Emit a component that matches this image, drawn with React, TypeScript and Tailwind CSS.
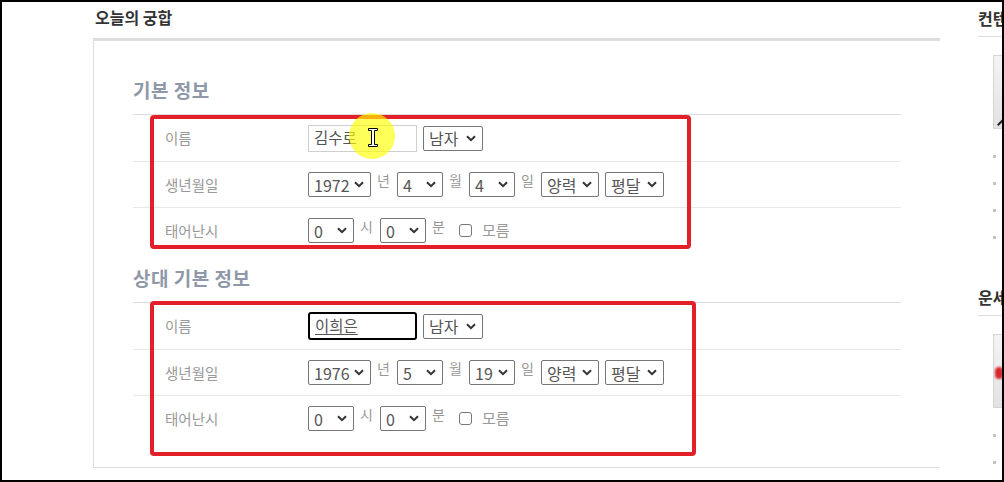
import React from 'react';

const FONT = { fontFamily: '"Noto Sans CJK KR", "Noto Sans", sans-serif' };

// native-looking select box
const Select = ({ value, w }: { value: string; w: string }) => (
  <div
    className={`${w} h-[25px] shrink-0 flex items-center justify-between pl-[5px] pr-[6px] border border-[#767676] rounded-[2px] bg-white text-[16px] leading-none text-[#555]`}
  >
    <span>{value}</span>
    <svg width="10" height="7" viewBox="0 0 10 7" className="shrink-0">
      <path d="M1 1.2 L5 5.2 L9 1.2" fill="none" stroke="#333" strokeWidth="2" />
    </svg>
  </div>
);

const Unit = ({ children }: { children: string }) => (
  <span className="w-[14px] shrink-0 text-[14px] leading-none text-[#999] mb-[10px]">{children}</span>
);

const Row = ({ label, first, children }: { label: string; first?: boolean; children: React.ReactNode }) => (
  <div className={`flex items-center border-t ${first ? 'h-[47px] border-[#dcdcdc]' : 'h-[46px] border-[#e8e8e8]'}`}>
    <div className="w-[175px] shrink-0 pl-[32px] text-[14.5px] text-[#999]">{label}</div>
    <div className="flex items-center gap-[6px]">{children}</div>
  </div>
);

interface Person {
  name: string;
  year: string;
  month: string;
  day: string;
  focused?: boolean;
}

const InfoBlock = ({ title, p }: { title: string; p: Person }) => (
  <div>
    <h3 className="h-[24px] text-[19px] leading-[24px] tracking-[0.5px] font-bold text-[#8f98a8] mb-[12px]">{title}</h3>
    <Row label="이름" first>
      {p.focused ? (
        <div className="w-[109px] h-[28px] flex items-center pl-[5px] border-2 border-black rounded-[3px] text-[15.5px] text-[#555]">
          <span className="underline underline-offset-2">{p.name}</span>
        </div>
      ) : (
        <div className="w-[109px] h-[27px] flex items-center pl-[5px] border border-[#cfcfcf] text-[15.5px] text-[#555]">
          {p.name}
        </div>
      )}
      <Select value="남자" w="w-[60px]" />
    </Row>
    <Row label="생년월일">
      <Select value={p.year} w="w-[63px]" />
      <Unit>년</Unit>
      <Select value={p.month} w="w-[46px]" />
      <Unit>월</Unit>
      <Select value={p.day} w="w-[46px]" />
      <Unit>일</Unit>
      <Select value="양력" w="w-[58px]" />
      <Select value="평달" w="w-[59px]" />
    </Row>
    <Row label="태어난시">
      <Select value="0" w="w-[46px]" />
      <Unit>시</Unit>
      <Select value="0" w="w-[46px]" />
      <Unit>분</Unit>
      <div className="ml-[7px] w-[13px] h-[13px] border border-[#767676] rounded-[3px] bg-white" />
      <span className="ml-[4px] text-[15px] text-[#999]">모름</span>
    </Row>
  </div>
);

const SideBox = ({ title, bullets, splash }: { title: string; bullets: number; splash?: boolean }) => (
  <div>
    <div className="h-[34px] pt-[4px] text-[16px] font-bold text-[#333] leading-[24px] whitespace-nowrap">{title}</div>
    <div className="border-t border-[#ddd] w-[120px]" />
    <div className="ml-[15px] mt-[18px] w-[90px] h-[74px] border border-[#d4d4d4] bg-gradient-to-b from-[#f4f4f4] to-[#e2e2e2] relative overflow-hidden">
      {splash ? (
        <div className="absolute left-[1px] top-[32px] w-[8px] h-[12px] rounded-full bg-[#d9262b] blur-[1px]" />
      ) : (
        <div className="absolute left-[2px] top-[64px] w-[12px] h-[2px] bg-[#222] -rotate-45" />
      )}
    </div>
    <div className="mt-[26px] flex flex-col gap-[24px] ml-[15px]">
      {Array.from({ length: bullets }).map((_, i) => (
        <div key={i} className="w-[3px] h-[3px] bg-[#c4c4c4]" />
      ))}
    </div>
  </div>
);

export default function App() {
  return (
    <div style={FONT} className="relative w-[1004px] h-[482px] overflow-hidden bg-white border-2 border-black flex">
      <div className="ml-[91px] w-[847px] shrink-0 flex flex-col">
        <h2 className="h-[36px] pt-[3px] pl-[2px] text-[16px] leading-[24px] font-bold text-[#333]">오늘의 궁합</h2>
        <div className="h-[430px] border-t-[3px] border-l border-b border-[#dddddd] pl-[39px] pr-[39px] pt-[37px]">
          <InfoBlock title="기본 정보" p={{ name: '김수로', year: '1972', month: '4', day: '4' }} />
          <div className="h-[13px]" />
          <InfoBlock title="상대 기본 정보" p={{ name: '이희은', year: '1976', month: '5', day: '19', focused: true }} />
        </div>
      </div>

      <div className="ml-[38px] w-[200px] shrink-0 flex flex-col">
        <SideBox title="컨텐츠 소개" bullets={4} />
        <div className="h-[42px]" />
        <SideBox title="운세 바로가기" bullets={2} splash />
      </div>

      {/* annotation boxes */}
      <div className="absolute left-[148px] top-[113px] w-[541px] h-[134px] border-4 border-[#e3202a] rounded-[4px]" />
      <div className="absolute left-[148px] top-[299px] w-[546px] h-[155px] border-4 border-[#e3202a] rounded-[4px]" />

      {/* cursor highlight */}
      <div className="absolute left-[347px] top-[111px] w-[46px] h-[46px] rounded-full bg-[#ffff00]/65" />
      <svg className="absolute left-[366px] top-[126px]" width="10" height="19" viewBox="0 0 10 19">
        <path
          d="M0.5 0.5 H9.5 V2.5 H6.5 V16.5 H9.5 V18.5 H0.5 V16.5 H3.5 V2.5 H0.5 Z"
          fill="#fff"
          stroke="#000"
          strokeWidth="1"
        />
      </svg>
    </div>
  );
}
